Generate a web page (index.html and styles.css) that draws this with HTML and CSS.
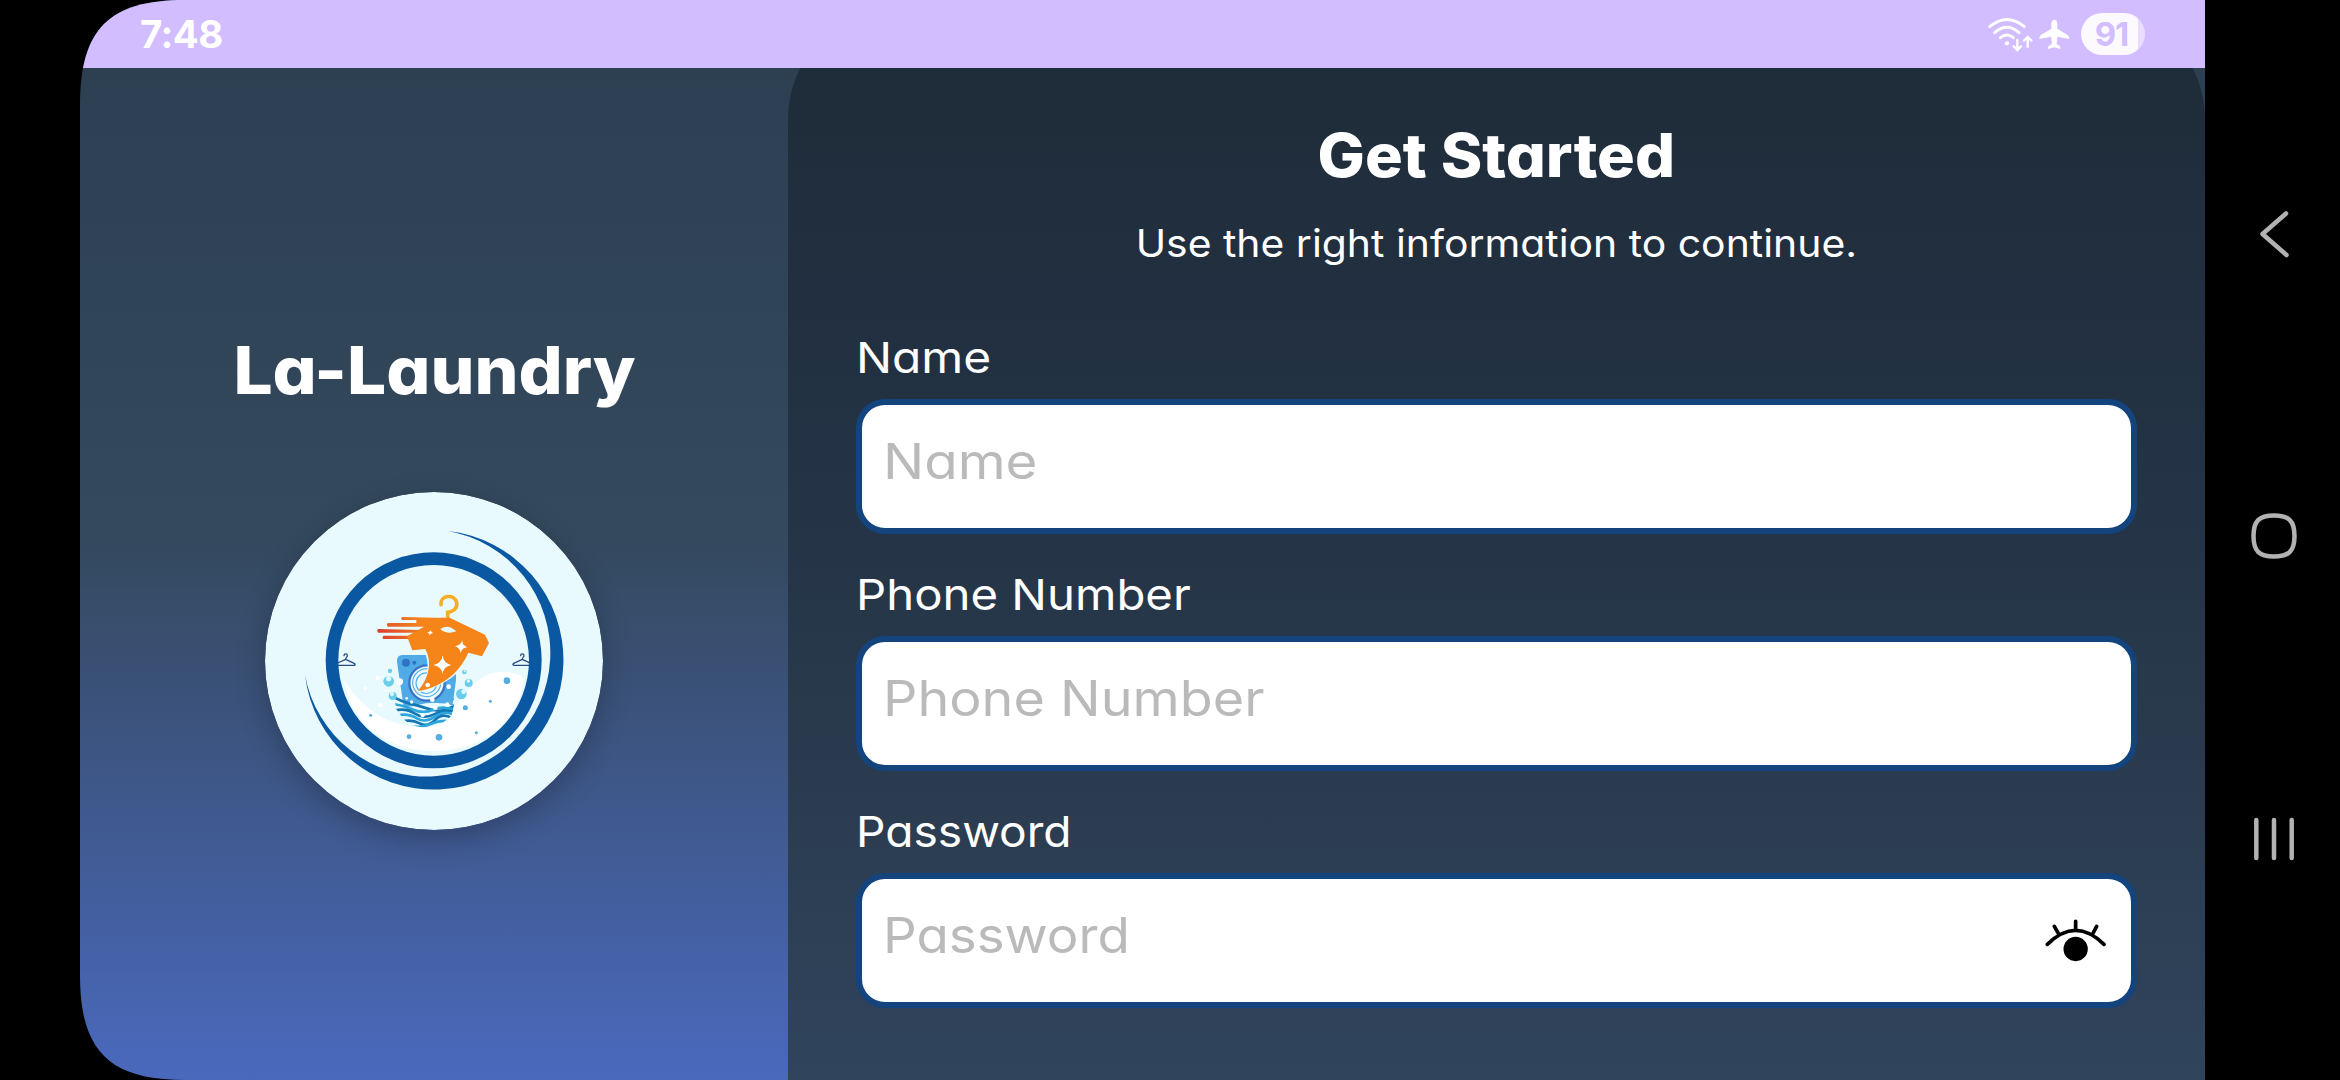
FILE: index.html
```html
<!DOCTYPE html>
<html lang="en">
<head>
<meta charset="utf-8">
<title>La-Laundry</title>
<link rel="stylesheet" href="styles.css">
</head>
<body>
<div class="device">
  <div class="screen">
    <header class="status">
      <span class="clock">7:48</span>
      <div class="status-icons">
        <svg class="wifi" viewBox="80 45 140 110" fill="none" stroke="#fff" stroke-width="8.5" stroke-linecap="round">
          <path d="M88 77Q140 34 192 77M103 95Q140 63 176 95M120 110Q140 94 159 110"/>
          <circle cx="140" cy="127" r="6.5" fill="#fff" stroke="none"/>
          <path stroke-width="7" d="M171 117V145M160 136L171 147L182 136M202 138V110M191 119L202 108L213 119"/>
        </svg>
        <svg class="plane" viewBox="235 52 100 98" fill="#fff">
          <path d="M284 57C290 57 293 63 293 70V84L325 104Q329 107 329 115L293 108L291 129L302 138V145L284 140L265 145V138L277 129L274 108L239 115Q239 107 243 104L275 84V70C275 63 278 57 284 57Z"/>
        </svg>
        <span class="battery">91</span>
      </div>
    </header>
    <main class="content">
      <section class="brand">
        <h1 class="brand-name">La-Laundry</h1>
        <svg class="logo" viewBox="30 36 1014 1014">
          <defs>
            <linearGradient id="speed" x1="366" x2="520" y1="0" y2="0" gradientUnits="userSpaceOnUse">
              <stop offset="0" stop-color="#dc3a33"/><stop offset="1" stop-color="#f58419"/>
            </linearGradient>
            <linearGradient id="speed2" x1="390" x2="500" y1="0" y2="0" gradientUnits="userSpaceOnUse">
              <stop offset="0" stop-color="#e45a2c"/><stop offset="1" stop-color="#f58419"/>
            </linearGradient>
            <clipPath id="water"><path d="M416 645L470 665L540 668L598 648V672L590 706C550 752 480 752 446 718L424 688Z"/></clipPath>
            <clipPath id="drum"><circle cx="536" cy="541" r="287"/></clipPath>
          </defs>
          <circle cx="537" cy="543" r="507" fill="#e9faff"/>
          <path fill="#fff" d="M268 600C320 686 400 738 480 738C625 735 620 575 745 575C778 575 795 585 806 595C795 720 690 813 536 813C400 813 285 730 268 600Z"/>
          <circle cx="536" cy="541" r="305" fill="none" stroke="#0a58a1" stroke-width="38"/>
          <path fill="#0a58a1" d="M578 153A389 389 0 1 1 150 585A371 371 0 1 0 578 153Z"/>
          <g clip-path="url(#drum)" fill="none" stroke="#294d7d" stroke-width="4" stroke-linecap="round" stroke-linejoin="round">
            <path d="M267 527C267 520 277 520 277 527C277 532 272 531 272 538L299 551Q302 556 297 556H247Q241 555 246 550L272 538"/>
            <path d="M797 527C797 520 807 520 807 527C807 532 802 531 802 538L829 551H824V556H777Q771 555 776 550L802 538"/>
          </g>
          <path fill="#50aae6" d="M440 525H592Q603 526 603 540V600L592 680H446L426 545Q425 527 440 525Z"/>
          <circle cx="453" cy="548" r="12" fill="#2f72c4"/><circle cx="478" cy="548" r="6" fill="#2f72c4"/>
          <circle cx="516" cy="609" r="53" fill="#ecfaff" stroke="#3973c6" stroke-width="7"/>
          <g fill="none" stroke="#50b2e8" stroke-width="3.5">
            <path d="M525 567A42 42 0 1 0 557 609M519 579A31 31 0 1 0 545 609"/>
          </g>
          <g clip-path="url(#water)">
            <path fill="#e9faff" d="M410 670Q450 690 490 674Q545 660 606 680V750H410Z"/>
            <g fill="none" stroke-width="8">
              <path stroke="#1476b3" d="M414 650Q440 665 462 670T525 688T602 674"/>
              <path stroke="#2ca6dc" d="M416 672Q446 676 475 689T535 689T602 691"/>
              <path stroke="#1476b3" d="M420 691Q455 684 480 701T535 704T600 694"/>
              <path stroke="#2ca6dc" d="M432 705Q462 700 486 715T540 710T595 704"/>
              <path stroke="#1476b3" d="M440 725Q470 717 494 730T540 720T590 714"/>
              <path stroke="#2ca6dc" d="M462 740Q502 743 529 731T585 724"/>
            </g>
          </g>
          <g fill="url(#speed2)">
            <path d="M441 411L580 414V431L484 430V420H441Q436 415 441 411Z"/>
            <path d="M398 429H532V440H398Q393 434 398 429Z"/>
          </g>
          <path fill="url(#speed)" d="M369 447L500 450V458H369Q364 452 369 447ZM385 467H470V477H385Q380 472 385 467Z"/>
          <path fill="none" stroke="#f5ae24" stroke-width="11" stroke-linecap="round" d="M558 374C555 345 598 340 605 368C608 387 593 395 578 397V416"/>
          <path fill="#e9faff" d="M504 502C528 555 520 600 486 638C565 620 624 580 649 515Z"/>
          <path fill="#f58419" d="M480 431L560 413H584L690 464L702 489L681 529L640 518C617 570 570 620 489 633C525 590 531 545 511 507L472 511L456 469L523 431Z"/>
          <path fill="#e9faff" d="M556 447Q580 430 604 454Q576 465 556 447Z"/>
          <path fill="#fff" d="M563 526Q565 550 589 555Q565 560 563 582Q560 560 535 555Q560 550 563 526ZM622 481Q621 496 637 502Q621 503 617 519Q615 504 600 499Q616 497 622 481ZM529 449Q526 456 535 459Q526 459 524 467Q524 459 517 457Q526 456 529 449Z"/>
          <g fill="#6bcde9">
            <circle cx="401" cy="604" r="16"/><circle cx="413" cy="648" r="12"/><circle cx="405" cy="573" r="6.5"/><circle cx="619" cy="642" r="16"/><circle cx="641" cy="609" r="12"/><circle cx="628" cy="576" r="7"/>
          </g>
          <g fill="#dff8fe">
            <circle cx="401" cy="596" r="8"/><circle cx="411" cy="642" r="6"/><circle cx="626" cy="635" r="7"/><circle cx="640" cy="603" r="5"/><circle cx="629" cy="574" r="3"/>
          </g>
          <g fill="#fff">
            <circle cx="368" cy="594" r="7"/><circle cx="434" cy="605" r="10"/><circle cx="376" cy="675" r="7"/><circle cx="331" cy="624" r="5"/><circle cx="392" cy="632" r="4"/><circle cx="518" cy="615" r="7"/><circle cx="581" cy="620" r="7"/><circle cx="532" cy="659" r="7"/><circle cx="455" cy="655" r="4"/><circle cx="470" cy="666" r="5"/><circle cx="541" cy="683" r="7"/><circle cx="503" cy="706" r="6"/><circle cx="577" cy="674" r="7"/>
          </g>
          <g fill="#56ade0">
            <circle cx="756" cy="602" r="10"/><circle cx="552" cy="772" r="10"/><circle cx="462" cy="770" r="7"/><circle cx="631" cy="683" r="7.5"/><circle cx="706" cy="664" r="4.5"/><circle cx="664" cy="758" r="4.5"/><circle cx="347" cy="706" r="4.5"/>
            <path d="M591 654h6v7h-6zM582 664h6v7h-6zM591 672h5v6h-5z"/>
          </g>
        </svg>
      </section>
      <section class="panel">
        <h2 class="title">Get Started</h2>
        <p class="subtitle">Use the right information to continue.</p>
        <form class="form">
          <div class="field">
            <label class="label label-name" for="name">Name</label>
            <div class="box"><input class="input input-name" id="name" type="text" placeholder="Name"></div>
          </div>
          <div class="field">
            <label class="label label-phone" for="phone">Phone Number</label>
            <div class="box"><input class="input input-phone" id="phone" type="tel" placeholder="Phone Number"></div>
          </div>
          <div class="field">
            <label class="label label-password" for="password">Password</label>
            <div class="box">
              <input class="input input-password" id="password" type="password" placeholder="Password">
              <svg class="eye" viewBox="190 410 190 140" fill="none" stroke="#000" stroke-width="11" stroke-linecap="round">
                <path d="M200 492Q285 408 370 492M221 438L233 459M285 423V446M348 438L337 459"/>
                <circle cx="285" cy="506" r="36.5" fill="#000" stroke="none"/>
              </svg>
            </div>
          </div>
        </form>
      </section>
    </main>
  </div>
  <nav class="navbar">
    <svg class="nav-icon" viewBox="0 0 60 60"><path d="M42 9.500L18.500 30L42.500 51"/></svg>
    <svg class="nav-icon" viewBox="0 0 60 60"><path d="M30 9.500C45 9.500 50.500 15 50.500 30S45 50.500 30 50.500S9.500 45 9.500 30S15 9.500 30 9.500Z"/></svg>
    <svg class="nav-icon" viewBox="0 0 60 60"><path d="M12.300 12V50M30 12V50M47.700 12V50"/></svg>
  </nav>
</div>
</body>
</html>
```
FILE: styles.css
```css
* { box-sizing: border-box; }

body {
  margin: 0;
  background: #000;
  color: #fff;
  font-family: Inter, "Open Sans", sans-serif;
  font-feature-settings: "cv11";
}

.device {
  display: flex;
  width: 2340px;
  height: 1080px;
  padding-left: 80px;
  overflow: hidden;
}

.screen {
  display: flex;
  flex-direction: column;
  width: 2125px;
  height: 1080px;
  background: linear-gradient(#2c3e50, #34495e 50%, #4a69bd);
  clip-path: path("M105 0H2125V1080H105C29 1080 0 1051 0 975V105C0 29 29 0 105 0Z");
}

/* Status bar */
.status {
  display: flex;
  flex: none;
  align-items: center;
  justify-content: space-between;
  height: 68px;
  padding: 0 60px 0 60px;
  background: #d1bdff;
}

.clock {
  font-size: 38.5px;
  font-weight: 700;
  letter-spacing: -0.6px;
}

.status-icons {
  display: flex;
  align-items: center;
}

.wifi { width: 46.7px; height: 36.7px; margin-right: 5px; }
.plane { width: 33.3px; height: 32.7px; margin-right: 9.3px; }

.battery {
  width: 64px;
  height: 42px;
  padding-right: 3px;
  border-radius: 21px;
  background: linear-gradient(90deg, #fcf9ff 89%, #e8ddff 89%);
  color: #d1bdff;
  font-size: 33px;
  font-weight: 700;
  line-height: 42px;
  letter-spacing: -1px;
  text-align: center;
}

/* Two-column content */
.content {
  display: flex;
  height: 1012px;
  overflow: hidden;
}

.brand {
  display: flex;
  flex-direction: column;
  align-items: center;
  width: 708.33px;
  padding-top: 262px;
}

.brand-name {
  margin: 0 0 82px;
  font-size: 66px;
  font-weight: 800;
  line-height: 80px;
  transform: scaleX(1.05);
}

.logo {
  width: 338px;
  height: 338px;
  border-radius: 50%;
  box-shadow: 0 10px 30px rgba(0, 0, 0, 0.24);
}

.panel {
  flex: 1;
  height: 1073px;
  margin-top: -61px;
  padding: 108px 68px 0;
  border-radius: 112px 112px 0 0;
  background: linear-gradient(#1f2d3a 61px, #212f40 293px, #253547 543px, #2b3c50 793px, #30445c);
}

.title {
  margin: 0 0 20px;
  font-size: 60px;
  font-weight: 800;
  line-height: 80px;
  text-align: center;
  transform: scaleX(1.05);
}

.subtitle {
  margin: 0 0 56px;
  font-size: 38.5px;
  line-height: 56px;
  text-align: center;
  transform: scaleX(1.062);
}

.form {
  display: flex;
  flex-direction: column;
  gap: 30px;
}

.field {
  display: flex;
  flex-direction: column;
  gap: 12px;
}

.label {
  align-self: flex-start;
  font-size: 43px;
  line-height: 60px;
  transform-origin: 0 50%;
}

.label-name { transform: scaleX(1.113); }
.label-phone { transform: scaleX(1.1); }
.label-password { transform: scaleX(1.073); }

.box {
  display: flex;
  align-items: center;
  justify-content: space-between;
  height: 135px;
  padding: 0 24px 0 21px;
  border: 6px solid #14447e;
  border-radius: 29px;
  background: #fff;
}

.input {
  flex: none;
  width: 1000px;
  height: 113px;
  padding: 0 0 10px;
  border: 0;
  outline: 0;
  background: transparent;
  color: #222;
  font: 49px Inter, "Open Sans", sans-serif;
  font-feature-settings: "cv11";
  transform-origin: 0 50%;
}

.input::placeholder { color: #bababa; opacity: 1; }

.input-name { transform: scaleX(1.116); }
.input-phone { transform: scaleX(1.1); }
.input-password { transform: scaleX(1.078); }

.eye { width: 63.3px; height: 46.7px; }

/* System navigation */
.navbar {
  display: flex;
  flex-direction: column;
  align-items: center;
  gap: 242px;
  width: 135px;
  padding: 204px 0 0 3px;
}

.nav-icon {
  flex: none;
  width: 60px;
  height: 60px;
  fill: none;
  stroke: #b2b2b2;
  stroke-width: 4.500;
  stroke-linecap: round;
  stroke-linejoin: round;
}
```
